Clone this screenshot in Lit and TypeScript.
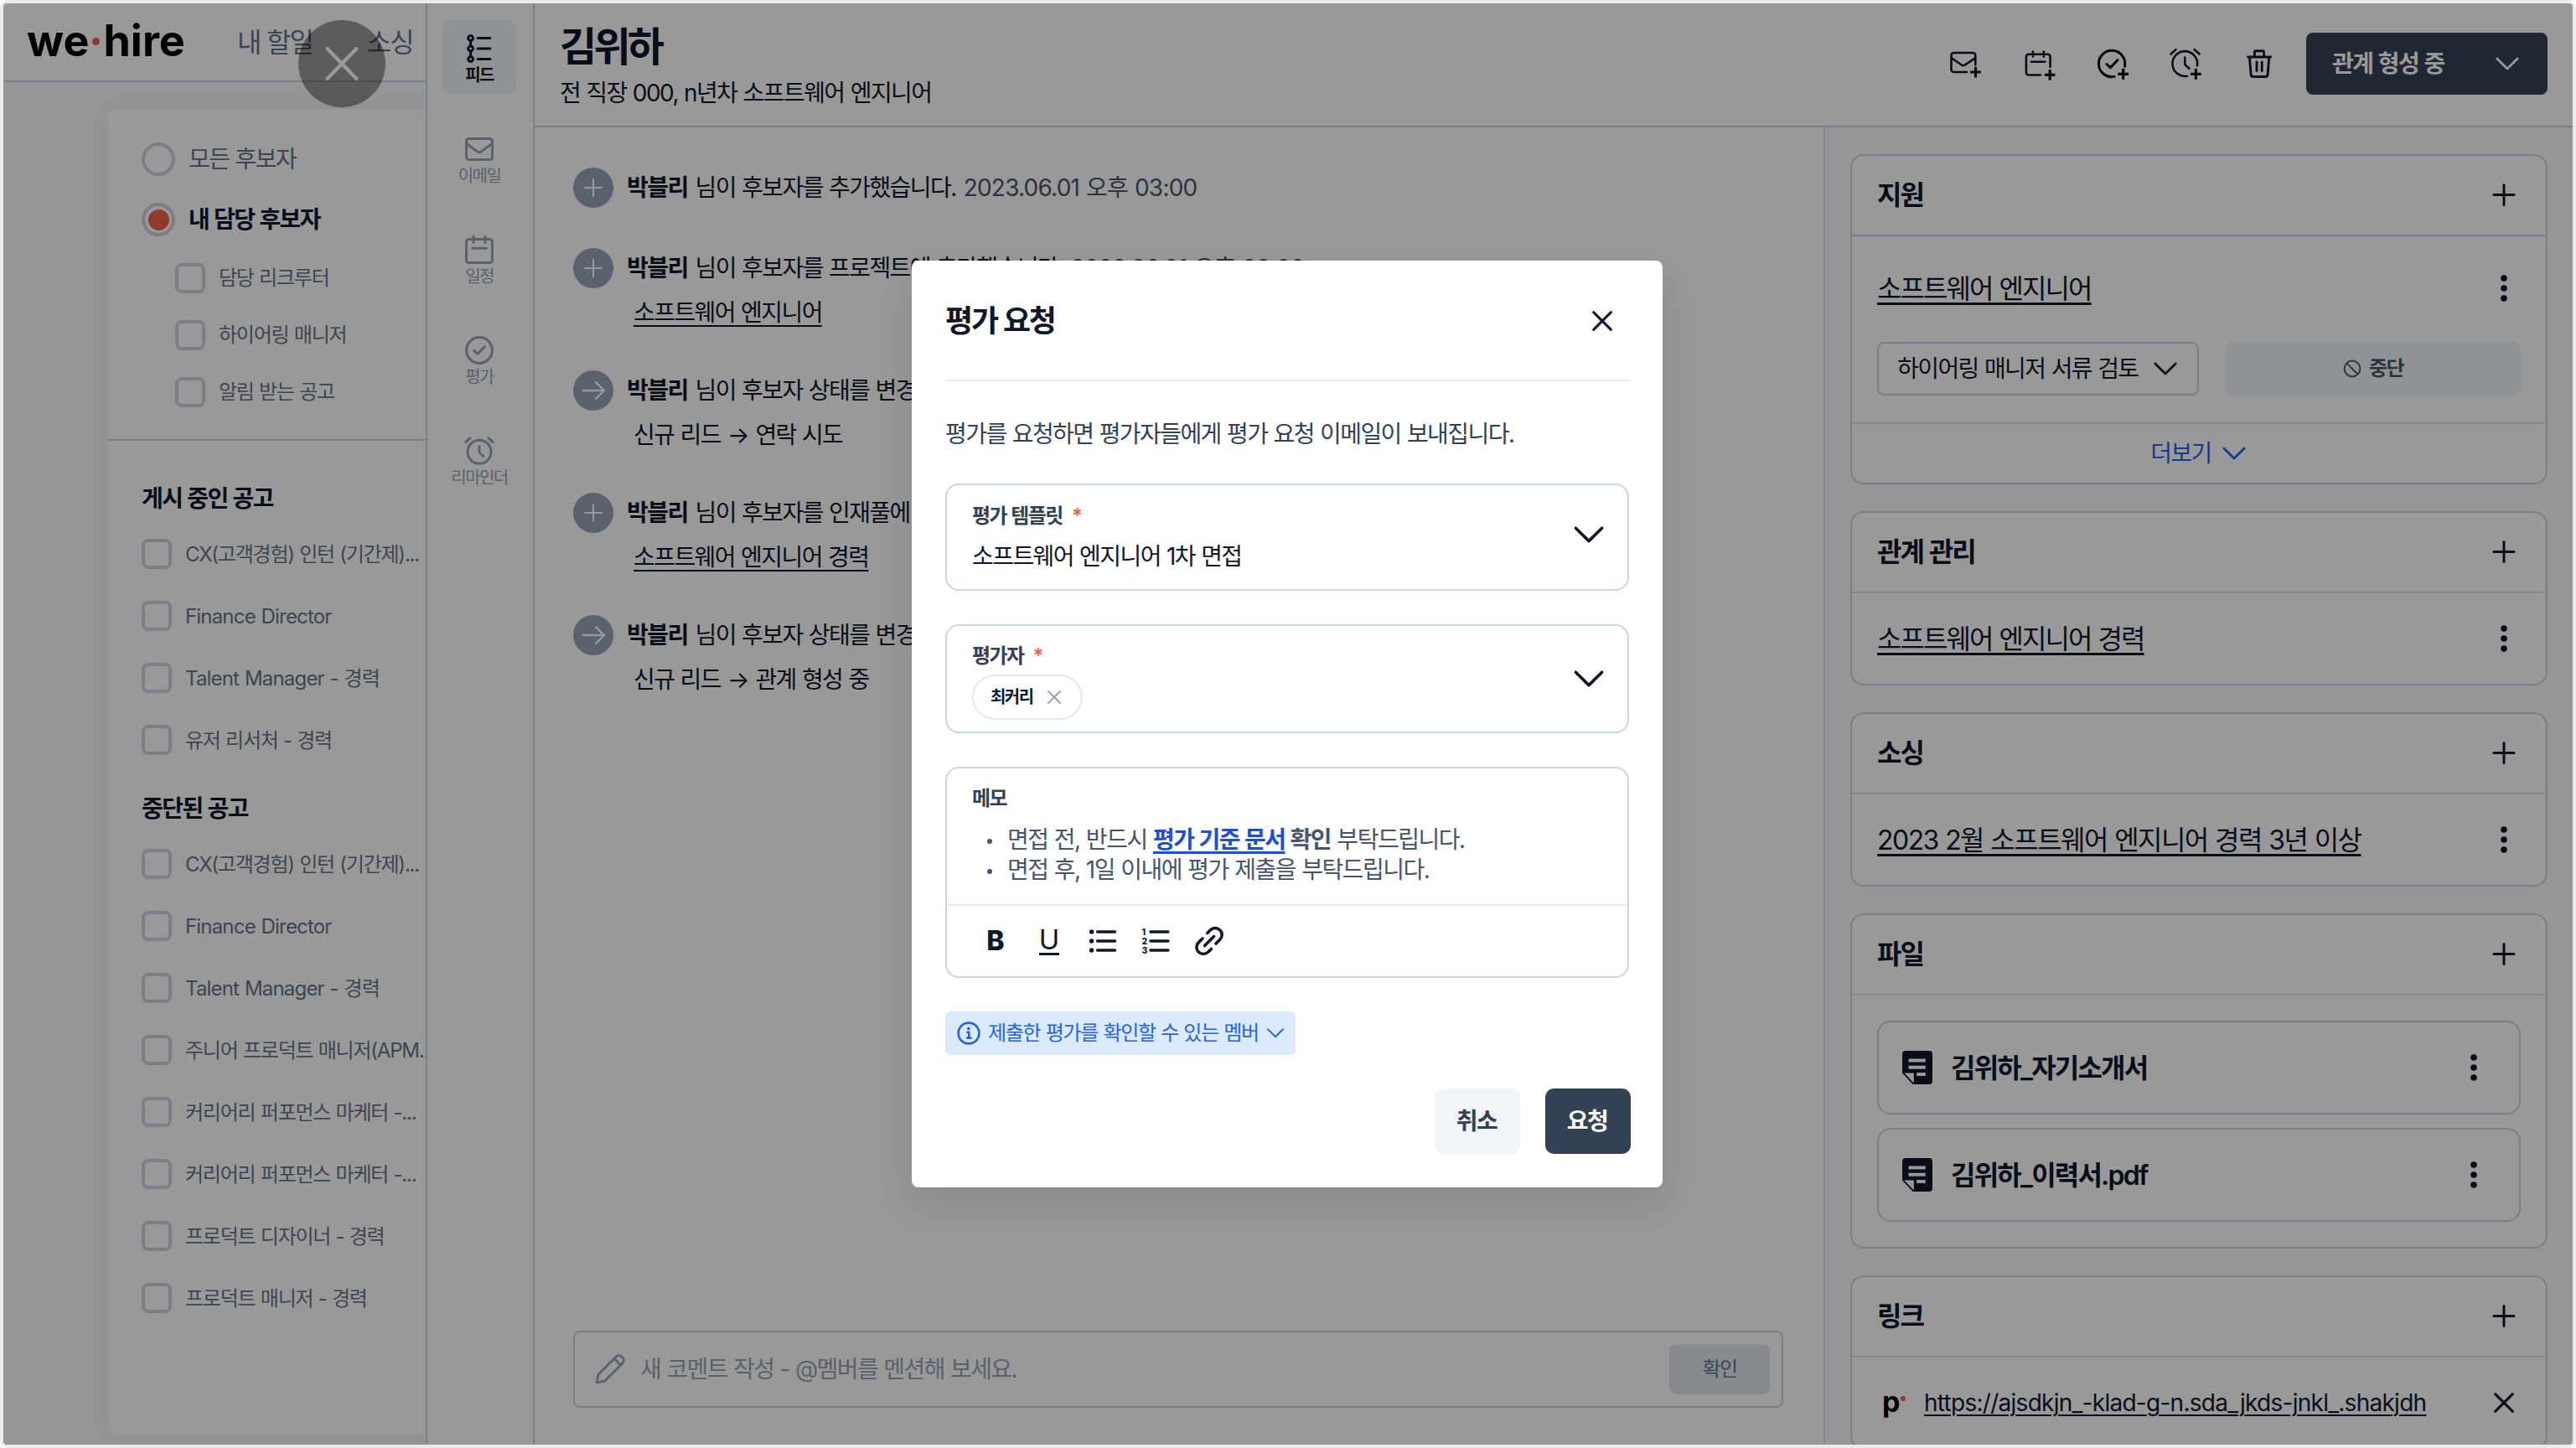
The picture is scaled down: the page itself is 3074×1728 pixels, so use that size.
import { LitElement, css, html, svg, nothing } from 'lit';
import type { SVGTemplateResult, TemplateResult } from 'lit';
import { customElement, state } from 'lit/decorators.js';
import { classMap } from 'lit/directives/class-map.js';

const openJobs = ['CX(고객경험) 인턴 (기간제)...', 'Finance Director', 'Talent Manager - 경력', '유저 리서처 - 경력'];

const closedJobs = [
  'CX(고객경험) 인턴 (기간제)...',
  'Finance Director',
  'Talent Manager - 경력',
  '주니어 프로덕트 매니저(APM...',
  '커리어리 퍼포먼스 마케터 -...',
  '커리어리 퍼포먼스 마케터 -...',
  '프로덕트 디자이너 - 경력',
  '프로덕트 매니저 - 경력',
];

const roles = ['담당 리크루터', '하이어링 매니저', '알림 받는 공고'];

const tabs = [
  { icon: 'feed', label: '피드' },
  { icon: 'mail', label: '이메일' },
  { icon: 'calendar', label: '일정' },
  { icon: 'check', label: '평가' },
  { icon: 'alarm', label: '리마인더' },
];

interface FeedItem {
  icon: 'plus' | 'arrow';
  text: string;
  date: string;
  link?: string;
  from?: string;
  to?: string;
}

const feed: FeedItem[] = [
  { icon: 'plus', text: '님이 후보자를 추가했습니다.', date: '2023.06.01 오후 03:00' },
  { icon: 'plus', text: '님이 후보자를 프로젝트에 추가했습니다.', date: '2023.06.01 오후 03:00', link: '소프트웨어 엔지니어' },
  { icon: 'arrow', text: '님이 후보자 상태를 변경했습니다.', date: '2023.06.01 오후 03:00', from: '신규 리드', to: '연락 시도' },
  { icon: 'plus', text: '님이 후보자를 인재풀에 추가했습니다.', date: '2023.06.01 오후 03:00', link: '소프트웨어 엔지니어 경력' },
  { icon: 'arrow', text: '님이 후보자 상태를 변경했습니다.', date: '2023.06.01 오후 03:00', from: '신규 리드', to: '관계 형성 중' },
];

// width, height, stroke width, content
type Icon = [number, number, number, SVGTemplateResult];

const icons: Record<string, Icon> = {
  feed: [40, 40, 3, svg`<circle cx="9.6" cy="7.4" r="2.9"/><circle cx="9.6" cy="20" r="2.9"/><circle cx="9.6" cy="32.6" r="2.9"/><path d="M9.6 10.5v6.4M9.6 23v6.4M18 7.4h15M18 20h15M18 32.6h15"/>`],
  mail: [40, 40, 3, svg`<rect x="4.5" y="7.5" width="31" height="25" rx="3"/><path d="M5 13.5l12.3 9.3a4.2 4.2 0 0 0 5.2 0L35 13.5"/>`],
  calendar: [40, 40, 3, svg`<rect x="4.5" y="7.5" width="31" height="28" rx="3"/><path d="M13 4v7.5M27 4v7.5M12 18.2h16.5"/>`],
  check: [40, 40, 3, svg`<circle cx="20" cy="20" r="15.4"/><path d="M13.5 20.3l4.6 4 8.2-8.6"/>`],
  alarm: [40, 40, 3, svg`<circle cx="20" cy="21.3" r="14"/><path d="M20 14.5V22l4.7 4.4M4 9.4l5-4.6M36 9.4l-5-4.6"/>`],
  mailAdd: [48, 48, 2.6, svg`<path d="M37.3 25.5V14a3 3 0 0 0-3-3H11.5a3 3 0 0 0-3 3v17a3 3 0 0 0 3 3H27M9 17.3l11.4 8a4 4 0 0 0 4.6 0l12-8"/><path class="butt" d="M37.5 27.8v12.6M31 34h12.8"/>`],
  calendarAdd: [48, 48, 2.6, svg`<path d="M38.6 28V15.8a3 3 0 0 0-3-3H12.9a3 3 0 0 0-3 3v18.7a3 3 0 0 0 3 3H27M18 9.6v6M30.8 9.6v6M16 21.8h16.4"/><path class="butt" d="M38.2 31v12.8M31.8 37.3h12.6"/>`],
  checkAdd: [48, 48, 3, svg`<path d="M39.5 27.2A15.7 15.7 0 1 0 27.2 39.4M18 24.6l4.4 4 8.6-8.9"/><path class="butt" d="M37.7 30v12.8M31.3 36.3h12.8"/>`],
  alarmAdd: [48, 48, 2.6, svg`<path d="M38 26.5A14.9 14.9 0 1 0 26 38.7M23.3 16.6V25l5.2 4.8M6.5 12.5l6-5.4M40.6 12.5l-6-5.4"/><path class="butt" d="M36.4 30v12.8M30 36.3h12.8"/>`],
  trash: [48, 48, 2.9, svg`<path d="M10.4 16h27.4M12.4 16l1.7 20.6a3 3 0 0 0 3 2.9h14a3 3 0 0 0 3-2.9L35.8 16M18.4 15.5v-5.1a1.6 1.6 0 0 1 1.6-1.6h8a1.6 1.6 0 0 1 1.6 1.6v5.1M21 22v10.6M27.2 22v10.6"/>`],
  chevron: [28, 16, 2.8, svg`<path d="M1.8 2l12.2 12L26.2 2"/>`],
  chevronBig: [36, 20, 3.6, svg`<path d="M2.4 2.2l15.6 15.4L33.6 2.2"/>`],
  chevronSmall: [22, 14, 2, svg`<path d="M2 2.4l9 8.8 9-8.8"/>`],
  plus: [28, 28, 3, svg`<path d="M14 1.6v24M2 13.6h24"/>`],
  feedPlus: [48, 48, 2, svg`<path d="M24 14v20M14 24h20"/>`],
  feedArrow: [48, 48, 2.4, svg`<path d="M12 24h25M27 14.2l10 9.8-10 9.8"/>`],
  kebab: [8, 32, 0, svg`<circle class="solid" cx="4" cy="4" r="3.8"/><circle class="solid" cx="4" cy="16" r="3.8"/><circle class="solid" cx="4" cy="28" r="3.8"/>`],
  cross: [28, 28, 3, svg`<path d="M3.6 3.6l20.8 20.8M24.4 3.6L3.6 24.4"/>`],
  crossBig: [44, 44, 4.4, svg`<path d="M4.5 4l35 36M39.5 4l-35 36"/>`],
  crossSmall: [18, 18, 2, svg`<path d="M2 2l14 14M16 2L2 16"/>`],
  ban: [22, 22, 2, svg`<circle cx="11" cy="11" r="9.4"/><path d="M4.6 4.6l12.8 12.8"/>`],
  info: [28, 28, 2.6, svg`<circle cx="14" cy="14" r="12.4"/><path d="M12.3 12.8h2v6.8M12.2 19.6h4.4"/><circle class="solid" cx="13.9" cy="8.4" r="1.9"/>`],
  pencil: [40, 40, 2.8, svg`<path d="M4.2 35.8l1.6-9.3L27.3 5a4.4 4.4 0 0 1 6.3 0l1.4 1.4a4.4 4.4 0 0 1 0 6.3L13.5 34.2zM25 7.5l7.6 7.6"/>`],
  doc: [36, 40, 0, svg`<path class="solid" fill-rule="evenodd" d="M4 0h28a4 4 0 0 1 4 4v32a4 4 0 0 1-4 4H12.6L0 26.6V4a4 4 0 0 1 4-4zM7.6 9.4v4h20.2v-4zM7.6 17.8v4h20.2v-4zM17.2 26v4h10.6v-4zM2.4 26.4L13.8 38.4V26.4z"/>`],
  list: [36, 36, 3.4, svg`<circle class="solid" cx="4.6" cy="7" r="2.7"/><circle class="solid" cx="4.6" cy="18" r="2.7"/><circle class="solid" cx="4.6" cy="29" r="2.7"/><path d="M11.6 7h21M11.6 18h21M11.6 29h21"/>`],
  numbered: [36, 36, 3.4, svg`<text class="num" x="1.5" y="10.5">1</text><text class="num" x="1.5" y="21.6">2</text><text class="num" x="1.5" y="32.6">3</text><path d="M12 7h21M12 18h21M12 29h21"/>`],
  link: [36, 36, 3.6, svg`<path d="M15.7 8.5l3.6-3.6a8 8 0 0 1 11.5 0 8 8 0 0 1 0 11.4L26 21M20.4 27.4l-3.6 3.7a8 8 0 0 1-11.5 0 8 8 0 0 1 0-11.5L10 15M12.6 23.6l11-11"/>`],
};

const icon = (name: string) => {
  const [w, h, stroke, content] = icons[name];
  return html`<svg class="icon" width=${w} height=${h} viewBox="0 0 ${w} ${h}" stroke-width=${stroke} aria-hidden="true">${content}</svg>`;
};

@customElement('app-root')
export class AppRoot extends LitElement {
  @state() private activeTab = 'feed';
  @state() private owner: 'all' | 'mine' = 'mine';

  static styles = css`
    :host {
      display: block;
      position: relative;
      box-sizing: border-box;
      width: 3074px;
      height: 1728px;
      padding: 4px;
      border-radius: 10px;
      background: #ebebeb;
      overflow: hidden;
      font-family: Inter, 'Noto Sans CJK KR', sans-serif;
      font-size: 28px;
      line-height: 36px;
      letter-spacing: -0.056em;
      word-spacing: 0.03em;
      color: #0f172a;
      white-space: nowrap;
    }
    * {
      box-sizing: border-box;
    }
    .icon {
      display: block;
      flex: none;
      fill: none;
      stroke: currentColor;
      stroke-linecap: round;
      stroke-linejoin: round;
      overflow: visible;
    }
    .icon .solid {
      fill: currentColor;
      stroke: none;
    }
    .icon .butt {
      stroke-linecap: butt;
      stroke-width: 3.2;
    }
    .icon .num {
      fill: currentColor;
      stroke: none;
      font-size: 10.5px;
      font-weight: 800;
      letter-spacing: 0;
    }
    .frame {
      display: flex;
      position: relative;
      height: 1720px;
      border-radius: 4px;
      background: #fff;
      overflow: hidden;
    }

    /* page behind the drawer */
    .page {
      width: 504px;
      flex: none;
      overflow: hidden;
      background: #f8fafc;
    }
    .gnb {
      display: flex;
      align-items: center;
      height: 94px;
      padding: 0 0 0 28px;
      border-bottom: 2px solid #cbd5e1;
      background: #fff;
    }
    .logo {
      flex: none;
      width: 251px;
      margin-top: -2px;
      font-size: 52px;
      font-weight: 700;
      letter-spacing: 0;
      line-height: 60px;
      color: #000;
    }
    .logo-dot {
      display: inline-block;
      width: 9px;
      height: 9px;
      margin: 0 4px 13px 4px;
      border-radius: 50%;
      background: #f05f4c;
    }
    .gnb-link {
      flex: none;
      margin-right: 65px;
      padding-top: 1px;
      font-size: 32px;
      letter-spacing: -0.065em;
      color: #64748b;
    }
    .filter {
      width: 480px;
      height: 1582px;
      margin: 32px 0 0 125px;
      border-radius: 8px;
      background: #fff;
      box-shadow: 0 0 24px rgba(15, 23, 42, 0.06);
    }
    .owners {
      display: flex;
      flex-direction: column;
      gap: 32px;
      height: 396px;
      padding: 40px 40px 0;
      border-bottom: 2px solid #cbd5e1;
    }
    .option {
      display: flex;
      align-items: center;
      gap: 16px;
      height: 40px;
      color: #64748b;
    }
    .option.selected {
      font-weight: 700;
      color: #0f172a;
    }
    .option.small,
    .job {
      font-size: 24px;
      letter-spacing: -0.051em;
    }
    .option.small {
      height: 36px;
      padding-left: 40px;
    }
    .radio {
      display: grid;
      place-items: center;
      width: 40px;
      height: 40px;
      border: 4px solid #cbd5e1;
      border-radius: 50%;
    }
    .radio-dot {
      width: 25px;
      height: 25px;
      border-radius: 50%;
      background: #f05f4c;
    }
    .checkbox {
      flex: none;
      width: 36px;
      height: 36px;
      border: 4px solid #cbd5e1;
      border-radius: 8px;
    }
    .jobs {
      display: flex;
      flex-direction: column;
      gap: 38px;
      padding: 51px 0 0 40px;
    }
    .jobs + .jobs {
      padding-top: 46px;
    }
    .jobs-title {
      margin: 0 0 -9px;
      font-size: 28px;
      font-weight: 700;
      line-height: 37px;
    }
    .job {
      display: flex;
      align-items: center;
      gap: 16px;
      height: 36px;
      color: #64748b;
    }
    .job-name {
      padding-top: 2px;
    }
    .job-name.latin {
      letter-spacing: -0.034em;
    }

    /* drawer */
    .rail {
      display: flex;
      flex-direction: column;
      align-items: center;
      gap: 32px;
      flex: none;
      width: 130px;
      padding: 20px 2px 0 0;
      border: 2px solid #cbd5e1;
      border-width: 0 2px;
      background: #fff;
    }
    .tab {
      display: flex;
      flex-direction: column;
      align-items: center;
      width: 88px;
      height: 88px;
      padding-top: 14px;
      border-radius: 8px;
      font-size: 20px;
      line-height: 24px;
      color: #94a3b8;
    }
    .tab.active {
      background: #f1f5f9;
      font-weight: 600;
      color: #0f172a;
    }
    .drawer {
      display: flex;
      flex-direction: column;
      flex: 1;
      min-width: 0;
    }
    .header {
      display: flex;
      align-items: flex-start;
      height: 148px;
      flex: none;
      padding: 35px 30px 0;
      border-bottom: 2px solid #cbd5e1;
    }
    .who {
      flex: 1;
      margin-top: -13px;
    }
    .name {
      margin: 0 0 7px;
      font-size: 48px;
      font-weight: 700;
      line-height: 60px;
      letter-spacing: -0.078em;
    }
    .actions {
      display: flex;
      gap: 40px;
      margin: 13px 32px 0 0;
    }
    .black {
      color: #000;
    }
    .stage {
      display: flex;
      align-items: center;
      justify-content: space-between;
      width: 288px;
      height: 74px;
      padding: 0 34px 0 31px;
      border-radius: 8px;
      background: #334155;
      font-weight: 600;
      color: #fff;
    }
    .content {
      display: flex;
      flex: 1;
      min-height: 0;
    }
    .feed {
      display: flex;
      flex-direction: column;
      justify-content: space-between;
      flex: 1;
      padding: 48px 48px 44px 46px;
    }
    .events {
      display: flex;
      flex-direction: column;
      gap: 48px;
    }
    .event {
      display: flex;
      gap: 16px;
    }
    .badge {
      width: 48px;
      height: 48px;
      border-radius: 50%;
      background: #94a3b8;
      color: #fff;
    }
    .event-line {
      display: flex;
      gap: 9px;
      line-height: 48px;
    }
    .event-line b {
      font-weight: 700;
    }
    .date {
      letter-spacing: -0.028em;
      color: #475569;
    }
    .event-sub {
      padding: 11px 0 3px 8px;
    }
    .to {
      margin: 0 1px;
    }
    .under {
      text-decoration: underline;
      text-decoration-thickness: 2px;
      text-underline-offset: 5px;
    }
    .comment {
      display: flex;
      align-items: center;
      height: 92px;
      padding: 0 14px 0 22px;
      border: 2px solid #cbd5e1;
      border-radius: 8px;
      color: #94a3b8;
    }
    .comment-text {
      flex: 1;
      padding-left: 16px;
    }
    .confirm {
      display: grid;
      place-items: center;
      width: 120px;
      height: 60px;
      border-radius: 8px;
      background: #e2e8f0;
      font-size: 24px;
      color: #64748b;
    }

    /* right column */
    .side {
      display: flex;
      flex-direction: column;
      gap: 32px;
      width: 894px;
      flex: none;
      padding: 32px 30px 0;
      border-left: 2px solid #e2e8f0;
      background: #f8fafc;
      overflow: hidden;
      font-size: 32px;
      line-height: 40px;
    }
    .card {
      flex: none;
      border: 2px solid #cbd5e1;
      border-radius: 16px;
      background: #fff;
    }
    .card-head {
      display: flex;
      align-items: center;
      justify-content: space-between;
      height: 96px;
      padding: 0 36px 0 30px;
      border-bottom: 2px solid #e2e8f0;
      font-weight: 600;
      letter-spacing: -0.062em;
    }
    .card-head.strong {
      border-color: #cbd5e1;
    }
    .card-row {
      display: flex;
      align-items: center;
      justify-content: space-between;
      height: 108px;
      padding: 0 46px 0 30px;
      letter-spacing: -0.06em;
    }
    .card-row .under {
      padding-top: 1px;
      text-decoration-thickness: 3px;
      text-underline-offset: 5px;
    }
    .card-row .dated {
      letter-spacing: -0.048em;
    }
    .card-row.tall {
      height: 124px;
    }
    .controls {
      display: flex;
      gap: 32px;
      height: 98px;
      padding: 2px 30px 0;
      font-size: 28px;
    }
    .select {
      display: flex;
      align-items: center;
      justify-content: space-between;
      width: 384px;
      height: 64px;
      padding: 0 24px 0 22px;
      border: 2px solid #cbd5e1;
      border-radius: 8px;
    }
    .stop {
      display: flex;
      align-items: center;
      justify-content: center;
      gap: 9px;
      flex: 1;
      height: 64px;
      border-radius: 8px;
      background: #f1f5f9;
      font-size: 24px;
      font-weight: 600;
      color: #475569;
    }
    .more {
      display: flex;
      align-items: center;
      justify-content: center;
      gap: 13px;
      height: 72px;
      padding-right: 2px;
      border-top: 2px solid #e2e8f0;
      font-size: 28px;
      color: #2563eb;
    }
    .files {
      display: flex;
      flex-direction: column;
      gap: 16px;
      padding: 30px;
    }
    .file {
      display: flex;
      align-items: center;
      gap: 22px;
      height: 112px;
      padding: 0 50px 0 28px;
      border: 2px solid #cbd5e1;
      border-radius: 16px;
      font-weight: 600;
      letter-spacing: -0.056em;
    }
    .file span {
      flex: 1;
      padding-top: 1px;
    }
    .card-row.url-row {
      padding: 0 36px;
    }
    .url {
      flex: 1;
      font-size: 28px;
      letter-spacing: -0.026em;
    }
    .url .under {
      text-decoration-thickness: 2px;
      text-underline-offset: 4px;
    }
    .site {
      display: flex;
      align-items: flex-start;
      width: 50px;
      height: 40px;
      font-size: 34px;
      font-weight: 700;
      line-height: 38px;
      letter-spacing: -1px;
      color: #000;
    }
    .site-dot {
      width: 6px;
      height: 6px;
      margin: 12px 0 0 2px;
      border-radius: 50%;
      background: #f05f4c;
    }

    /* overlays */
    .close-drawer {
      position: absolute;
      left: 352px;
      top: 20px;
      display: grid;
      place-items: center;
      width: 104px;
      height: 104px;
      border-radius: 50%;
      background: rgba(0, 0, 0, 0.4);
      color: #fff;
    }
    .dim {
      position: absolute;
      inset: 0;
      display: flex;
      align-items: center;
      justify-content: center;
      padding-right: 2px;
      background: rgba(0, 0, 0, 0.4);
    }
    .modal {
      width: 896px;
      height: 1106px;
      padding: 0 40px;
      border-radius: 8px;
      background: #fff;
      box-shadow: 0 20px 50px rgba(15, 23, 42, 0.12);
    }
    .modal-head {
      display: flex;
      align-items: center;
      justify-content: space-between;
      height: 144px;
      padding: 2px 18px 0 0;
      border-bottom: 2px solid #e2e8f0;
      font-size: 36px;
      font-weight: 700;
      line-height: 44px;
      letter-spacing: -0.062em;
    }
    .desc {
      margin: 45px 0 41px;
      color: #334155;
    }
    .field {
      display: flex;
      align-items: center;
      justify-content: space-between;
      height: 128px;
      margin-bottom: 40px;
      padding: 0 28px 0 30px;
      border: 2px solid #cbd5e1;
      border-radius: 16px;
    }
    .field > .icon {
      margin-bottom: 6px;
    }
    .field.people {
      height: 130px;
      padding-top: 6px;
    }
    .field-main {
      display: flex;
      flex-direction: column;
      align-items: flex-start;
      gap: 14px;
    }
    .people .field-main {
      gap: 6px;
    }
    .label {
      font-size: 24px;
      font-weight: 600;
      line-height: 32px;
      color: #334155;
    }
    .label i {
      margin-left: 11px;
      font-style: normal;
      color: #f05f4c;
    }
    .person {
      display: flex;
      align-items: center;
      gap: 16px;
      height: 54px;
      padding: 0 23px 0 20px;
      border: 2px solid #e2e8f0;
      border-radius: 27px;
      font-size: 20px;
      font-weight: 600;
    }
    .person .icon {
      color: #94a3b8;
    }
    .memo {
      height: 252px;
      border: 2px solid #cbd5e1;
      border-radius: 16px;
    }
    .memo-body {
      height: 164px;
      padding: 20px 30px 0;
      border-bottom: 2px solid #e2e8f0;
    }
    .memo-list {
      margin: 15px 0 0;
      padding: 0;
      list-style: none;
      letter-spacing: -0.053em;
      color: #475569;
    }
    .memo-list li {
      display: flex;
      align-items: center;
      white-space: pre;
    }
    .memo-list li::before {
      content: '';
      width: 6px;
      height: 6px;
      margin: 4px 18px 0;
      border-radius: 50%;
      background: #475569;
    }
    .memo-list a {
      font-weight: 700;
      color: #1d4ed8;
      text-decoration: underline;
      text-decoration-thickness: 3px;
      text-underline-offset: 4px;
    }
    .toolbar {
      display: flex;
      align-items: center;
      gap: 27.8px;
      height: 84px;
      padding-left: 40px;
    }
    .tool {
      width: 36px;
      font-size: 32px;
      line-height: 36px;
      letter-spacing: 0;
      text-align: center;
    }
    .bold {
      font-weight: 800;
    }
    .underlined {
      width: 24px;
      height: 33px;
      margin: 0 6px;
      border-bottom: 3px solid #0f172a;
      font-size: 33px;
      line-height: 28px;
    }
    .members {
      display: flex;
      align-items: center;
      gap: 9px;
      width: 418px;
      height: 52px;
      margin-top: 40px;
      padding: 0 13px 0 14px;
      border-radius: 6px;
      background: #dbeafe;
      font-size: 24px;
      letter-spacing: -0.053em;
      color: #2563eb;
    }
    .members span {
      flex: 1;
    }
    .buttons {
      display: flex;
      justify-content: flex-end;
      gap: 30px;
      margin: 40px -2px 0 0;
    }
    .button {
      display: grid;
      place-items: center;
      width: 102px;
      height: 78px;
      padding-right: 2px;
      border-radius: 10px;
      background: #f1f5f9;
      font-weight: 600;
      color: #334155;
    }
    .button.primary {
      background: #334155;
      color: #fff;
    }
  `;

  private renderJobs(title: string, jobs: string[]) {
    return html`
      <section class="jobs">
        <h3 class="jobs-title">${title}</h3>
        ${jobs.map(
          job => html`
            <div class="job">
              <span class="checkbox"></span>
              <span class="job-name ${classMap({ latin: /^[A-Z][a-z]/.test(job) })}">${job}</span>
            </div>
          `
        )}
      </section>
    `;
  }

  private renderPage() {
    const owners = [
      { id: 'all' as const, label: '모든 후보자' },
      { id: 'mine' as const, label: '내 담당 후보자' },
    ];
    return html`
      <div class="page">
        <nav class="gnb">
          <div class="logo">we<span class="logo-dot"></span>hire</div>
          <span class="gnb-link">내 할일</span>
          <span class="gnb-link">소싱</span>
        </nav>
        <div class="filter">
          <div class="owners">
            ${owners.map(
              o => html`
                <div class="option ${classMap({ selected: this.owner === o.id })}" @click=${() => (this.owner = o.id)}>
                  <span class="radio">${this.owner === o.id ? html`<span class="radio-dot"></span>` : nothing}</span>
                  ${o.label}
                </div>
              `
            )}
            ${roles.map(role => html`<div class="option small"><span class="checkbox"></span>${role}</div>`)}
          </div>
          ${this.renderJobs('게시 중인 공고', openJobs)} ${this.renderJobs('중단된 공고', closedJobs)}
        </div>
      </div>
    `;
  }

  private renderEvent(item: FeedItem) {
    return html`
      <div class="event">
        <span class="badge">${icon(item.icon === 'plus' ? 'feedPlus' : 'feedArrow')}</span>
        <div>
          <div class="event-line"><b>박블리</b><span>${item.text}</span><span class="date">${item.date}</span></div>
          ${item.link ? html`<div class="event-sub"><span class="under">${item.link}</span></div>` : nothing}
          ${item.from ? html`<div class="event-sub">${item.from} <span class="to">→</span> ${item.to}</div>` : nothing}
        </div>
      </div>
    `;
  }

  private renderCard(title: string, body: TemplateResult, strong = false) {
    return html`
      <section class="card">
        <div class="card-head ${classMap({ strong })}"><span>${title}</span>${icon('plus')}</div>
        ${body}
      </section>
    `;
  }

  private renderSide() {
    return html`
      <aside class="side">
        ${this.renderCard(
          '지원',
          html`
            <div class="card-row tall"><span class="under">소프트웨어 엔지니어</span>${icon('kebab')}</div>
            <div class="controls">
              <div class="select">하이어링 매니저 서류 검토 ${icon('chevron')}</div>
              <div class="stop">${icon('ban')}중단</div>
            </div>
            <div class="more">더보기 ${icon('chevron')}</div>
          `,
          true
        )}
        ${this.renderCard('관계 관리', html`<div class="card-row"><span class="under">소프트웨어 엔지니어 경력</span>${icon('kebab')}</div>`)}
        ${this.renderCard('소싱', html`<div class="card-row"><span class="under dated">2023 2월 소프트웨어 엔지니어 경력 3년 이상</span>${icon('kebab')}</div>`)}
        ${this.renderCard(
          '파일',
          html`
            <div class="files">
              ${['김위하_자기소개서', '김위하_이력서.pdf'].map(f => html`<div class="file">${icon('doc')}<span>${f}</span>${icon('kebab')}</div>`)}
            </div>
          `
        )}
        ${this.renderCard(
          '링크',
          html`
            <div class="card-row url-row">
              <div class="site">p<span class="site-dot"></span></div>
              <div class="url"><span class="under">https://ajsdkjn_-klad-g-n.sda_jkds-jnkl_.shakjdh</span></div>
              ${icon('cross')}
            </div>
          `
        )}
      </aside>
    `;
  }

  private renderModal() {
    return html`
      <div class="dim">
        <div class="modal" role="dialog" aria-modal="true">
          <div class="modal-head"><span>평가 요청</span>${icon('cross')}</div>
          <p class="desc">평가를 요청하면 평가자들에게 평가 요청 이메일이 보내집니다.</p>
          <div class="field">
            <div class="field-main">
              <div class="label">평가 템플릿<i>*</i></div>
              <div>소프트웨어 엔지니어 1차 면접</div>
            </div>
            ${icon('chevronBig')}
          </div>
          <div class="field people">
            <div class="field-main">
              <div class="label">평가자<i>*</i></div>
              <div class="person">최커리 ${icon('crossSmall')}</div>
            </div>
            ${icon('chevronBig')}
          </div>
          <div class="memo">
            <div class="memo-body">
              <div class="label">메모</div>
              <ul class="memo-list">
                <li>면접 전, 반드시 <a>평가 기준 문서</a><b> 확인</b> 부탁드립니다.</li>
                <li>면접 후, 1일 이내에 평가 제출을 부탁드립니다.</li>
              </ul>
            </div>
            <div class="toolbar">
              <span class="tool bold">B</span>
              <span class="tool underlined">U</span>
              ${icon('list')} ${icon('numbered')} ${icon('link')}
            </div>
          </div>
          <div class="members">${icon('info')}<span>제출한 평가를 확인할 수 있는 멤버</span>${icon('chevronSmall')}</div>
          <div class="buttons">
            <div class="button">취소</div>
            <div class="button primary">요청</div>
          </div>
        </div>
      </div>
    `;
  }

  render() {
    return html`
      <div class="frame">
        ${this.renderPage()}
        <div class="rail">
          ${tabs.map(
            t => html`
              <div class="tab ${classMap({ active: this.activeTab === t.icon })}" @click=${() => (this.activeTab = t.icon)}>
                ${icon(t.icon)}<span>${t.label}</span>
              </div>
            `
          )}
        </div>
        <div class="drawer">
          <header class="header">
            <div class="who">
              <h1 class="name">김위하</h1>
              <div>전 직장 000, n년차 소프트웨어 엔지니어</div>
            </div>
            <div class="actions">
              ${icon('mailAdd')} ${icon('calendarAdd')}
              <span class="black">${icon('checkAdd')}</span>
              ${icon('alarmAdd')} ${icon('trash')}
            </div>
            <div class="stage">관계 형성 중 ${icon('chevron')}</div>
          </header>
          <div class="content">
            <main class="feed">
              <div class="events">${feed.map(item => this.renderEvent(item))}</div>
              <div class="comment">
                ${icon('pencil')}
                <span class="comment-text">새 코멘트 작성 - @멤버를 멘션해 보세요.</span>
                <span class="confirm">확인</span>
              </div>
            </main>
            ${this.renderSide()}
          </div>
        </div>
        <div class="close-drawer">${icon('crossBig')}</div>
        ${this.renderModal()}
      </div>
    `;
  }
}

declare global {
  interface HTMLElementTagNameMap {
    'app-root': AppRoot;
  }
}
